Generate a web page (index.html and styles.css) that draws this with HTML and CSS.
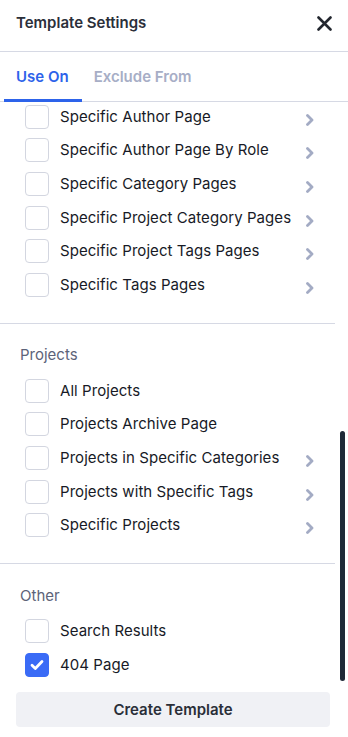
FILE: index.html
```html
<!DOCTYPE html>
<html lang="en">
<head>
<meta charset="utf-8">
<title>Template Settings</title>
<link rel="stylesheet" href="styles.css">
</head>
<body>
<div class="panel">
  <header class="header">
    <h1 class="title">Template Settings</h1>
    <button class="close" aria-label="Close">
      <svg width="15" height="15" viewBox="0 0 15 15"><path d="M1.5 1.5L13.5 13.5M13.5 1.5L1.5 13.5" stroke="#23272f" stroke-width="2.6" stroke-linecap="round"/></svg>
    </button>
  </header>
  <nav class="tabs">
    <span class="tab tab-active">Use On</span>
    <span class="tab">Exclude From</span>
  </nav>
  <div class="scroll">
    <div class="content">
      <section class="section section-first">
        <div class="row"><span class="box"></span><span class="label">Specific Author Page</span><span class="chev"><svg width="10" height="12" viewBox="0 0 10 12"><path d="M2.5 1.5L7 6L2.5 10.5" fill="none" stroke="#a3abc4" stroke-width="2.8" stroke-linecap="round" stroke-linejoin="round"/></svg></span></div>
        <div class="row"><span class="box"></span><span class="label">Specific Author Page By Role</span><span class="chev"><svg width="10" height="12" viewBox="0 0 10 12"><path d="M2.5 1.5L7 6L2.5 10.5" fill="none" stroke="#a3abc4" stroke-width="2.8" stroke-linecap="round" stroke-linejoin="round"/></svg></span></div>
        <div class="row"><span class="box"></span><span class="label">Specific Category Pages</span><span class="chev"><svg width="10" height="12" viewBox="0 0 10 12"><path d="M2.5 1.5L7 6L2.5 10.5" fill="none" stroke="#a3abc4" stroke-width="2.8" stroke-linecap="round" stroke-linejoin="round"/></svg></span></div>
        <div class="row"><span class="box"></span><span class="label">Specific Project Category Pages</span><span class="chev"><svg width="10" height="12" viewBox="0 0 10 12"><path d="M2.5 1.5L7 6L2.5 10.5" fill="none" stroke="#a3abc4" stroke-width="2.8" stroke-linecap="round" stroke-linejoin="round"/></svg></span></div>
        <div class="row"><span class="box"></span><span class="label">Specific Project Tags Pages</span><span class="chev"><svg width="10" height="12" viewBox="0 0 10 12"><path d="M2.5 1.5L7 6L2.5 10.5" fill="none" stroke="#a3abc4" stroke-width="2.8" stroke-linecap="round" stroke-linejoin="round"/></svg></span></div>
        <div class="row"><span class="box"></span><span class="label">Specific Tags Pages</span><span class="chev"><svg width="10" height="12" viewBox="0 0 10 12"><path d="M2.5 1.5L7 6L2.5 10.5" fill="none" stroke="#a3abc4" stroke-width="2.8" stroke-linecap="round" stroke-linejoin="round"/></svg></span></div>
      </section>
      <section class="section">
        <h2 class="group">Projects</h2>
        <div class="row"><span class="box"></span><span class="label">All Projects</span></div>
        <div class="row"><span class="box"></span><span class="label">Projects Archive Page</span></div>
        <div class="row"><span class="box"></span><span class="label">Projects in Specific Categories</span><span class="chev"><svg width="10" height="12" viewBox="0 0 10 12"><path d="M2.5 1.5L7 6L2.5 10.5" fill="none" stroke="#a3abc4" stroke-width="2.8" stroke-linecap="round" stroke-linejoin="round"/></svg></span></div>
        <div class="row"><span class="box"></span><span class="label">Projects with Specific Tags</span><span class="chev"><svg width="10" height="12" viewBox="0 0 10 12"><path d="M2.5 1.5L7 6L2.5 10.5" fill="none" stroke="#a3abc4" stroke-width="2.8" stroke-linecap="round" stroke-linejoin="round"/></svg></span></div>
        <div class="row"><span class="box"></span><span class="label">Specific Projects</span><span class="chev"><svg width="10" height="12" viewBox="0 0 10 12"><path d="M2.5 1.5L7 6L2.5 10.5" fill="none" stroke="#a3abc4" stroke-width="2.8" stroke-linecap="round" stroke-linejoin="round"/></svg></span></div>
      </section>
      <section class="section section-last">
        <h2 class="group">Other</h2>
        <div class="row"><span class="box"></span><span class="label">Search Results</span></div>
        <div class="row"><span class="box box-checked"><svg width="14" height="12" viewBox="0 0 14 12"><path d="M2 6.3L5.3 9.5L12 2.5" fill="none" stroke="#ffffff" stroke-width="2.8" stroke-linecap="round" stroke-linejoin="round"/></svg></span><span class="label">404 Page</span></div>
      </section>
    </div>
    <div class="scrollbar"></div>
  </div>
  <footer class="footer">
    <button class="create">Create Template</button>
  </footer>
</div>
</body>
</html>
```
FILE: styles.css
```css
* { box-sizing: border-box; }
html, body { margin: 0; padding: 0; background: #ffffff; }
body {
  font-family: Inter, "Noto Sans", "Liberation Sans", sans-serif;
  color: #1f2433;
  width: 348px;
  height: 737px;
  overflow: hidden;
}
.panel {
  display: flex;
  flex-direction: column;
  height: 737px;
}
.header {
  height: 52px;
  flex: none;
  display: flex;
  justify-content: space-between;
  align-items: flex-start;
  padding: 13px 16px 0 16px;
  border-bottom: 1px solid #d6d9e4;
}
.title {
  margin: 0;
  font-size: 15px;
  line-height: 20px;
  font-weight: 600;
  color: #2b2f3a;
}
.close {
  border: 0;
  background: none;
  padding: 0;
  margin: 3px 0 0 0;
  width: 15px;
  height: 15px;
  display: flex;
}
.tabs {
  height: 50px;
  flex: none;
  display: flex;
  padding-left: 4px;
  border-bottom: 1px solid #d6d9e4;
}
.tab {
  display: flex;
  align-items: center;
  padding: 0 13px 2px 12px;
  font-size: 15px;
  font-weight: 600;
  color: #a7aec6;
  height: 50px;
}
.tab-active {
  color: #2d63ea;
  border-bottom: 3px solid #2d63ea;
  padding-top: 1px;
  padding-bottom: 0;
  margin-bottom: -1px;
}
.scroll {
  flex: 1;
  position: relative;
  overflow: hidden;
}
.content {
  width: 335px;
  margin-top: -2px;
}
.section {
  padding: 21.5px 0 21px 20px;
  border-bottom: 1px solid #d6d9e4;
}
.section-first { padding-top: 0; }
.section-last { border-bottom: 0; padding-bottom: 0; }
.group {
  margin: 0 0 9px 0;
  font-size: 15px;
  line-height: 20px;
  font-weight: 400;
  color: #5d6379;
}
.row {
  height: 33.6px;
  display: flex;
  align-items: center;
  padding: 0 20px 0 5px;
}
.box {
  width: 24px;
  height: 24px;
  flex: none;
  border: 1px solid #d3d6e0;
  border-radius: 4px;
  background: #ffffff;
  display: flex;
  align-items: center;
  justify-content: center;
}
.box-checked {
  background: #3a6bf6;
  border-color: #3a6bf6;
}
.label {
  margin-left: 11px;
  font-size: 15px;
  line-height: 20px;
  font-weight: 400;
  letter-spacing: 0.06px;
  color: #171a26;
  flex: 1;
  white-space: nowrap;
}
.chev {
  display: flex;
  width: 10px;
  height: 12px;
  margin-top: 6px;
}
.scrollbar {
  position: absolute;
  right: 3px;
  top: 329px;
  width: 5px;
  height: 250px;
  border-radius: 3px;
  background: #1f2937;
}
.footer {
  flex: none;
  height: 56px;
  padding: 11px 18px 10px 16px;
}
.create {
  width: 314px;
  height: 35px;
  border: 0;
  border-radius: 4px;
  background: #f0f1f5;
  font-family: Inter, "Noto Sans", "Liberation Sans", sans-serif;
  font-size: 15px;
  font-weight: 600;
  color: #2a2e38;
  padding: 0;
}
```
